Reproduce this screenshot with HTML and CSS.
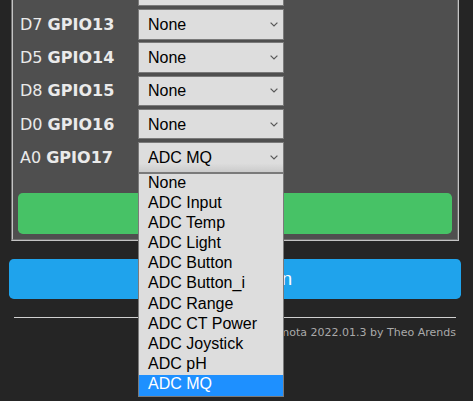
FILE: index.html
```html
<!DOCTYPE html>
<html lang="en">
<head>
<meta charset="utf-8">
<title>Configure Template</title>
<link rel="stylesheet" href="styles.css">
</head>
<body>
<div class="page">
  <fieldset class="template">
    <div class="gpio-list">
      <div class="row"><span class="label">D6 <b>GPIO12</b></span><div class="pick"><select class="sel"><option>None</option></select></div></div>
      <div class="row"><span class="label">D7 <b>GPIO13</b></span><div class="pick"><select class="sel"><option>None</option></select></div></div>
      <div class="row"><span class="label">D5 <b>GPIO14</b></span><div class="pick"><select class="sel"><option>None</option></select></div></div>
      <div class="row"><span class="label">D8 <b>GPIO15</b></span><div class="pick"><select class="sel"><option>None</option></select></div></div>
      <div class="row"><span class="label">D0 <b>GPIO16</b></span><div class="pick"><select class="sel"><option>None</option></select></div></div>
      <div class="row"><span class="label">A0 <b>GPIO17</b></span>
        <div class="pick">
          <select class="sel sel-open"><option>ADC MQ</option></select>
          <ul class="menu">
            <li class="opt">None</li>
            <li class="opt">ADC Input</li>
            <li class="opt">ADC Temp</li>
            <li class="opt">ADC Light</li>
            <li class="opt">ADC Button</li>
            <li class="opt">ADC Button_i</li>
            <li class="opt">ADC Range</li>
            <li class="opt">ADC CT Power</li>
            <li class="opt">ADC Joystick</li>
            <li class="opt">ADC pH</li>
            <li class="opt opt-active">ADC MQ</li>
          </ul>
        </div>
      </div>
    </div>
    <button class="btn btn-save">Save</button>
  </fieldset>
  <button class="btn btn-config">Configuration</button>
  <div class="foot">
    <hr class="rule">
    <span class="credit">Tasmota 2022.01.3 by Theo Arends</span>
  </div>
</div>
</body>
</html>
```

FILE: styles.css
```css
html {
  margin: 0;
  padding: 0;
  background: #252525;
  overflow: hidden;
}
body {
  margin: 0;
  padding: 0;
  min-height: 401px;
  font-family: "DejaVu Sans", Verdana, sans-serif;
  font-size: 16px;
  color: #eaeaea;
}
.page {
  width: 452px;
  margin-left: 9px;
}
.template {
  margin: -31.25px 2px 0 2px;
  padding: 5px;
  border: 2px groove #c4c4c4;
  background: #4f4f4f;
  min-inline-size: 0;
}
.gpio-list {
  display: flex;
  flex-direction: column;
  gap: 2.75px;
}
.row {
  display: flex;
  align-items: center;
}
.label {
  width: 118px;
  padding-left: 2px;
  white-space: nowrap;
  color: #eaeaea;
}
.label b {
  font-weight: bold;
}
.pick {
  position: relative;
  width: 146px;
}
.sel {
  -webkit-appearance: none;
  appearance: none;
  box-sizing: border-box;
  display: block;
  width: 146px;
  height: 30.5px;
  margin: 0;
  padding: 0 20px 0 9px;
  border: 1px solid #7a7a7a;
  border-radius: 0;
  background-color: #dddddd;
  background-image: url("data:image/svg+xml,%3Csvg xmlns='http://www.w3.org/2000/svg' width='8' height='5' viewBox='0 0 8 5'%3E%3Cpath d='M0.6 0.6 L4 4 L7.4 0.6' fill='none' stroke='%23585858' stroke-width='1.2'/%3E%3C/svg%3E");
  background-repeat: no-repeat;
  background-position: right 5px center;
  background-size: 8px 5px;
  font-family: "Liberation Sans", Arial, sans-serif;
  font-size: 16px;
  color: #000;
}
.sel-open {
  background-image: url("data:image/svg+xml,%3Csvg xmlns='http://www.w3.org/2000/svg' width='8' height='5' viewBox='0 0 8 5'%3E%3Cpath d='M0.6 0.6 L4 4 L7.4 0.6' fill='none' stroke='%23585858' stroke-width='1.2'/%3E%3C/svg%3E"), linear-gradient(#dddddd 70%, #cbcbcb);
  background-repeat: no-repeat, no-repeat;
  background-position: right 5px center, 0 0;
  background-size: 8px 5px, 100% 100%;
}
.menu {
  position: absolute;
  top: 100%;
  left: 0;
  z-index: 5;
  box-sizing: border-box;
  width: 146px;
  margin: 0;
  padding: 0;
  list-style: none;
  border: 1px solid #7a7a7a;
  background: #dddddd;
  font-family: "Liberation Sans", Arial, sans-serif;
  font-size: 16px;
  color: #000;
}
.opt {
  height: 20.2px;
  line-height: 18.2px;
  padding-left: 9px;
  white-space: nowrap;
}
.opt-active {
  background: #1e90ff;
  color: #fff;
}
.btn {
  display: block;
  box-sizing: border-box;
  width: 100%;
  border: 0;
  border-radius: 0.3rem;
  padding: 0;
  font-family: "Liberation Sans", Arial, sans-serif;
  font-size: 1.2rem;
  color: #faffff;
}
.btn-save {
  height: 41px;
  margin-top: 20.5px;
  background: #47c266;
}
.btn-config {
  height: 40px;
  margin-top: 18px;
  background: #1fa3ec;
}
.foot {
  margin-top: 18px;
  padding: 0 5px;
  text-align: right;
  font-size: 11px;
  line-height: 13px;
}
.rule {
  height: 0;
  margin: 0 0 8px 0;
  border: 0;
  border-top: 1px solid #d0d0d0;
}
.credit {
  color: #aaa;
}
```
